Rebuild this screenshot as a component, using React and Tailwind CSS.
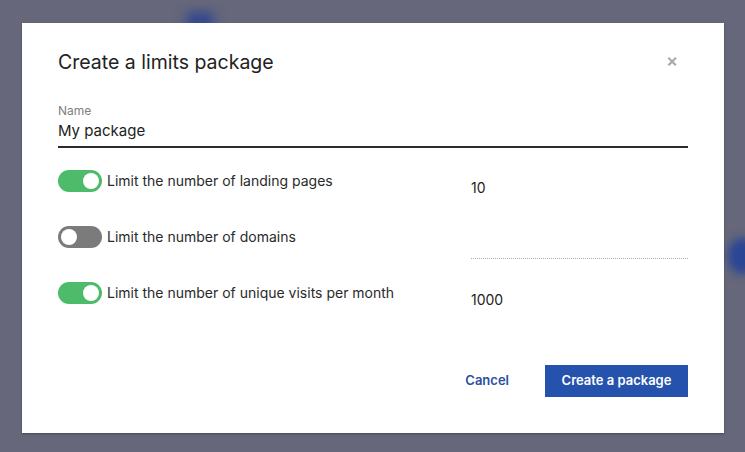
import React, { useState } from 'react';

function Toggle({ on, onChange }) {
  return (
    <button
      type="button"
      onClick={onChange}
      className={`relative w-[44px] h-[22px] rounded-full shrink-0 ${on ? 'bg-[#4dbb6a]' : 'bg-[#7b7b7b]'}`}
    >
      <span
        className={`absolute top-[3px] w-[16px] h-[16px] rounded-full bg-white ${on ? 'left-[25px]' : 'left-[3px]'}`}
      />
    </button>
  );
}

export default function App() {
  const [name, setName] = useState('My package');
  const [limits, setLimits] = useState([
    { id: 'pages', label: 'Limit the number of landing pages', on: true, value: '10' },
    { id: 'domains', label: 'Limit the number of domains', on: false, value: '' },
    { id: 'visits', label: 'Limit the number of unique visits per month', on: true, value: '1000' },
  ]);

  const flip = (id) =>
    setLimits((l) => l.map((x) => (x.id === id ? { ...x, on: !x.on } : x)));

  return (
    <div
      className="relative w-[745px] h-[452px] bg-[#66677a] overflow-hidden pt-[23px] pl-[22px]"
      style={{ fontFamily: 'Inter, "Noto Sans", sans-serif' }}
    >
      <div className="absolute left-[185px] top-[12px] w-[30px] h-[16px] rounded-full bg-[#2f4590] blur-[6px]" />
      <div className="absolute left-[728px] top-[238px] w-[30px] h-[36px] rounded-full bg-[#2a4594] blur-[5px]" />

      <div className="relative w-[702px] h-[410px] bg-white shadow-[0_1px_2px_rgba(0,0,0,0.3)] px-[36px] pt-[26px]">
        <div className="flex items-center justify-between">
          <h1 className="text-[19.5px] text-[#222] leading-[28px] mt-[-1px]">Create a limits package</h1>
          <button className="text-[#aaa] text-[18px] font-semibold leading-none mr-[10px] mt-[-4px]">×</button>
        </div>

        <div className="mt-[28px]">
          <div className="text-[12px] text-[#808080] leading-[14px]">Name</div>
          <input
            value={name}
            onChange={(e) => setName(e.target.value)}
            className="w-full text-[15px] text-[#222] leading-[20px] pt-[3px] pb-[5px] border-b-[2.5px] border-[#2c2c2c] outline-none"
          />
        </div>

        <div className="mt-[5px] flex flex-col">
          {limits.map((l) => (
            <div key={l.id} className="flex items-center h-[56px]">
              <Toggle on={l.on} onChange={() => flip(l.id)} />
              <span className="ml-[5px] w-[364px] text-[14px] text-[#2a2a2a] leading-[20px] mt-[-1px]">{l.label}</span>
              <input
                value={l.value}
                disabled={!l.on}
                onChange={(e) =>
                  setLimits((s) => s.map((x) => (x.id === l.id ? { ...x, value: e.target.value } : x)))
                }
                className={`w-[217px] text-[14px] text-[#222] bg-transparent outline-none pt-[18px] pb-[4px] border-b ${
                  l.on ? 'border-transparent' : 'border-dotted border-[#aaa]'
                }`}
              />
            </div>
          ))}
        </div>

        <div className="mt-[44px] flex justify-end items-center">
          <button className="text-[13px] font-semibold text-[#2c4f9c] mr-[36px]">Cancel</button>
          <button className="w-[143px] h-[32px] bg-[#2452ac] text-white text-[13px] font-semibold">
            Create a package
          </button>
        </div>
      </div>
    </div>
  );
}
